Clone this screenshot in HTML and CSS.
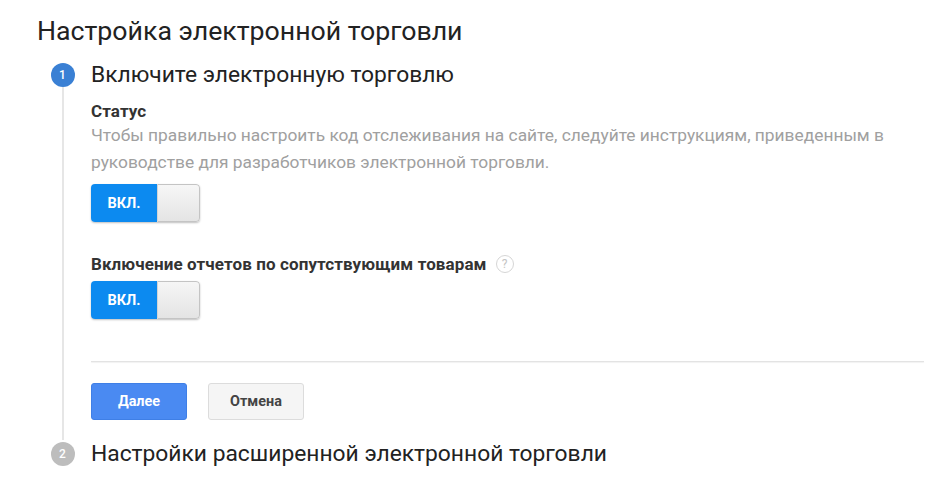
FILE: index.html
```html
<!DOCTYPE html>
<html lang="ru">
<head>
<meta charset="utf-8">
<link rel="stylesheet" href="styles.css">
</head>
<body>
<div class="page">
  <h1 class="title">Настройка электронной торговли</h1>
  <div class="steps">
    <div class="step">
      <div class="rail">
        <div class="num active">1</div>
        <div class="line"></div>
      </div>
      <div class="content">
        <h2 class="step-title">Включите электронную торговлю</h2>
        <div class="field-label first">Статус</div>
        <p class="desc">Чтобы правильно настроить код отслеживания на сайте, следуйте инструкциям, приведенным в руководстве для разработчиков электронной торговли.</p>
        <div class="toggle"><span class="on">ВКЛ.</span><span class="knob"></span></div>
        <div class="field-label second">Включение отчетов по сопутствующим товарам <span class="help">?</span></div>
        <div class="toggle toggle-second"><span class="on">ВКЛ.</span><span class="knob"></span></div>
        <div class="divider"></div>
        <div class="actions">
          <button class="btn primary">Далее</button>
          <button class="btn secondary">Отмена</button>
        </div>
      </div>
    </div>
    <div class="step">
      <div class="rail">
        <div class="num">2</div>
      </div>
      <div class="content">
        <h2 class="step-title">Настройки расширенной электронной торговли</h2>
      </div>
    </div>
  </div>
</div>
</body>
</html>
```
FILE: styles.css
```css
html, body {
  margin: 0;
  padding: 0;
  background: #ffffff;
}
body {
  font-family: Roboto, "Liberation Sans", Arial, sans-serif;
  color: #212121;
}
.page {
  padding: 16px 0 0 37px;
}
.title {
  margin: 0;
  font-size: 26.7px;
  font-weight: 400;
  line-height: 30px;
  color: #222222;
}
.steps {
  margin-top: 17px;
  padding-left: 13px;
}
.step {
  display: flex;
  gap: 16px;
}
.rail {
  width: 25px;
  display: flex;
  flex-direction: column;
  align-items: center;
}
.num {
  width: 24px;
  height: 24px;
  border-radius: 50%;
  background: #bdbdbd;
  color: #fff;
  font-size: 12px;
  font-weight: 500;
  line-height: 24px;
  text-align: center;
  flex: none;
}
.num.active {
  background: #3a80d4;
}
.line {
  flex: 1;
  width: 2px;
  background: #e6e6e6;
  margin: 0 0 2px;
}
.content {
  flex: 1;
  padding-right: 5px;
}
.step-title {
  margin: 0;
  font-size: 22.8px;
  font-weight: 400;
  line-height: 24px;
  color: #222222;
}
.field-label {
  font-size: 17px;
  font-weight: 700;
  line-height: 20px;
  letter-spacing: 0.1px;
  color: #333333;
  display: flex;
  align-items: center;
  gap: 9px;
}
.field-label.first {
  margin-top: 14px;
}
.field-label.second {
  margin-top: 32px;
}
.desc {
  margin: 1px 0 0;
  font-size: 17.35px;
  line-height: 27px;
  color: #a0a0a0;
  max-width: 820px;
}
.toggle {
  margin-top: 8px;
  width: 109px;
  height: 38px;
  border-radius: 4px;
  display: flex;
  overflow: hidden;
  box-shadow: 0 1px 2px rgba(0,0,0,0.25);
}
.toggle.toggle-second {
  margin-top: 7px;
}
.on {
  width: 66px;
  background: #0c8af0;
  color: #fff;
  font-size: 14.5px;
  font-weight: 700;
  display: flex;
  align-items: center;
  justify-content: center;
}
.knob {
  flex: 1;
  background: linear-gradient(#f6f6f6, #e4e4e4);
  border: 1px solid #c4c4c4;
  border-left-color: #d4d4d4;
  border-radius: 0 4px 4px 0;
}
.help {
  width: 16px;
  height: 16px;
  border: 1px solid #d6d6d6;
  border-radius: 50%;
  color: #c4c4c4;
  font-size: 12px;
  font-weight: 400;
  line-height: 16px;
  text-align: center;
  box-sizing: content-box;
}
.divider {
  margin-top: 42px;
  height: 1px;
  background: #e3e3e3;
  box-shadow: 0 1px 1px rgba(0,0,0,0.06);
}
.actions {
  margin-top: 21px;
  display: flex;
  gap: 21px;
  padding-bottom: 22px;
}
.btn {
  height: 37px;
  font-family: Roboto, "Liberation Sans", Arial, sans-serif;
  font-size: 14.4px;
  font-weight: 700;
  border-radius: 3px;
  padding: 0;
  width: 96px;
}
.btn.primary {
  background: #4a8af2;
  border: 1px solid #3f7fe6;
  color: #fff;
}
.btn.secondary {
  background: #f5f5f5;
  border: 1px solid #dcdcdc;
  color: #444;
}
```
